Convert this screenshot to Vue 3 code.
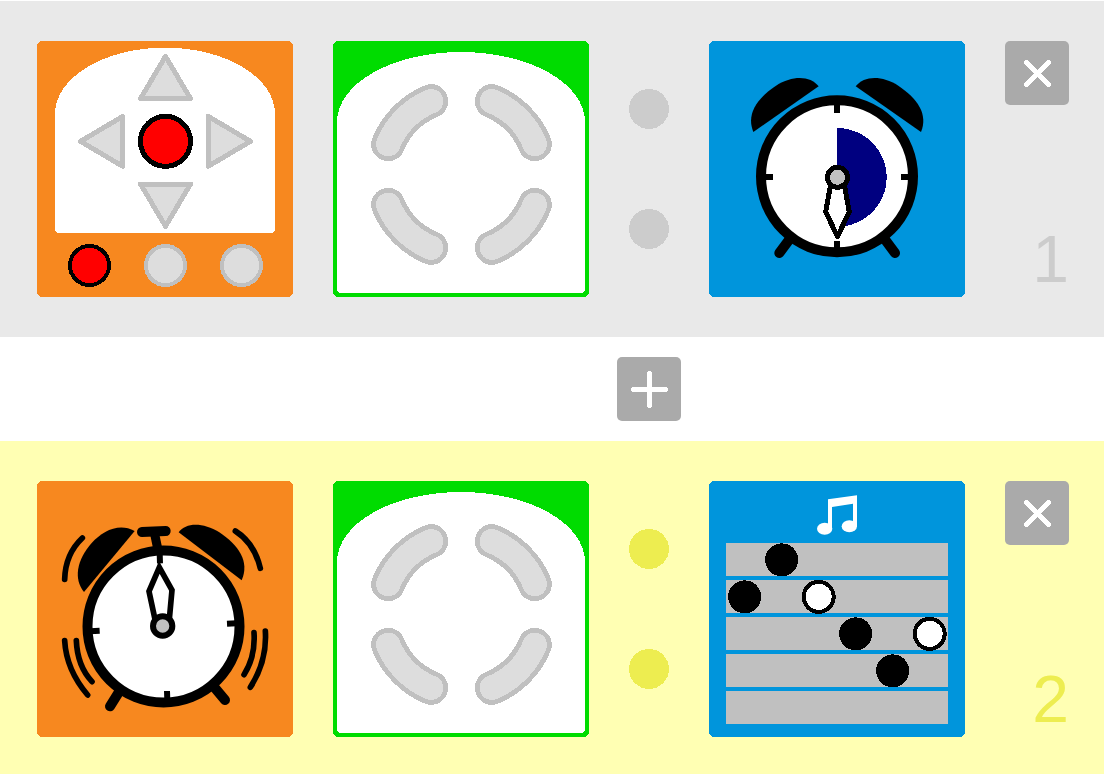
<script setup>
const arrows = [0, 90, 180, 270]
const corners = [
  { x: 1, y: 1 },
  { x: -1, y: 1 },
  { x: 1, y: -1 },
  { x: -1, y: -1 },
]
const staff = [0, 1, 2, 3, 4]
const notes = [
  { row: 1, long: false },
  { row: 0, long: false },
  { row: 1, long: true },
  { row: 2, long: false },
  { row: 3, long: false },
  { row: 2, long: true },
]
const steps = [
  { id: 1, theme: 'gray', event: 'buttons', action: 'timer' },
  { id: 2, theme: 'yellow', event: 'alarm', action: 'music' },
]
</script>

<template>
  <main class="program">
    <template v-for="(step, i) in steps" :key="step.id">
      <div v-if="i > 0" class="insert">
        <button class="tool add" type="button" aria-label="Add step">
          <svg viewBox="0 0 64 64" aria-hidden="true"><path d="M32.5 16.5V48.5M16.5 32.5H48.5" /></svg>
        </button>
      </div>

      <section class="step" :class="step.theme">
        <svg v-if="step.event === 'buttons'" class="tile" viewBox="21 21 768 768" role="img" aria-label="Buttons">
          <rect class="orange" x="21" y="21" width="768" height="768" rx="16" />
          <path class="white" d="M75 240A330 199 0 0 1 735 240V585Q735 597 723 597H87Q75 597 75 585Z" />
          <path
            v-for="angle in arrows"
            :key="angle"
            class="off"
            d="M406.500 67L481.500 194H331.500Z"
            :transform="`rotate(${angle} 406.500 322)`"
          />
          <circle class="on" cx="406.500" cy="322" r="75" />
          <circle class="on small" cx="178.500" cy="694.500" r="58.500" />
          <circle class="off small" cx="406.500" cy="694.500" r="58.500" />
          <circle class="off small" cx="634.500" cy="694.500" r="58.500" />
        </svg>

        <svg v-else class="tile" viewBox="21 21 768 768" role="img" aria-label="Alarm">
          <rect class="orange" x="21" y="21" width="768" height="768" rx="16" />
          <g class="smooth">
            <path d="M314 171C268 145 218 170 185 207C140 258 130 315 162 354Z" />
            <path d="M446 175C468 144 520 145 568 175C625 213 660 262 635 319Z" />
            <path class="limb" d="M336 174L407 171M268 652L240 697M553 640L585 678" />
            <path class="stem" d="M374 180L384 228" />
            <circle class="face" cx="400.500" cy="457.500" r="228" />
            <path class="tick" d="M389 238L390 268M180 472L209 470.500M591 449.500L620 448M411 651L412 680" />
            <path class="hand" d="M375 436L357 352L388 280L426 348L418 436" />
            <circle class="hub" cx="398" cy="456" r="29" />
            <path
              class="wave"
              d="M157 192Q106 240 104 316M616 171Q673 207 691 283M104 500Q109 588 173 663M139 500Q142 576 186 623M706 471Q712 560 661 640M672 476Q677 547 642 602"
            />
          </g>
        </svg>

        <svg class="tile" viewBox="21 21 768 768" role="img" aria-label="Proximity sensors">
          <rect class="green" x="21" y="21" width="768" height="768" rx="16" />
          <path class="white" d="M33 264A372 210 0 0 1 777 264V765Q777 777 765 777H45Q33 777 33 765Z" />
          <g
            v-for="c in corners"
            :key="`${c.x}:${c.y}`"
            :transform="`translate(406.500 421.500) scale(${c.x} ${c.y})`"
          >
            <path class="sensor-rim" d="M-220 -91A238 238 0 0 1 -91 -220" />
            <path class="sensor" d="M-220 -91A238 238 0 0 1 -91 -220" />
          </g>
        </svg>

        <div class="dots" aria-hidden="true">
          <svg viewBox="0 0 40 40"><circle cx="20" cy="20" r="20" /></svg>
          <svg viewBox="0 0 40 40"><circle cx="20" cy="20" r="20" /></svg>
        </div>

        <svg v-if="step.action === 'timer'" class="tile" viewBox="21 21 768 768" role="img" aria-label="Timer">
          <rect class="blue" x="21" y="21" width="768" height="768" rx="16" />
          <g class="smooth">
            <path d="M350 157C325 125 272 123 222 155C165 193 132 240 154 294Z" />
            <path d="M350 157C325 125 272 123 222 155C165 193 132 240 154 294Z" transform="translate(811 0) scale(-1 1)" />
            <path class="limb" d="M266 611L232 657M545 611L579 657" />
            <circle class="face" cx="405" cy="427" r="228" />
          </g>
          <path class="tick" d="M405 206V237M184 429H213M597 429H626M405 621V650" />
          <path class="slice" d="M405 430V282A149 148 0 0 1 405 578Z" />
          <path class="hand down" d="M386 452L371 534L406.500 607L442 534L427 452" />
          <circle class="hub down" cx="406.500" cy="430" r="30" />
        </svg>

        <svg v-else class="tile" viewBox="21 21 768 768" role="img" aria-label="Melody">
          <rect class="blue" x="21" y="21" width="768" height="768" rx="16" />
          <g class="white smooth">
            <path d="M378 76L465 64V157H453V89L390 99V164H378Z" />
            <ellipse cx="368" cy="164" rx="23" ry="18" />
            <ellipse cx="442" cy="157" rx="23" ry="18" />
          </g>
          <rect v-for="n in staff" :key="n" class="line" x="72" :y="207 + n * 111" width="666" height="99" />
          <circle
            v-for="(note, col) in notes"
            :key="col"
            :class="note.long ? 'long' : 'short'"
            :cx="128 + col * 111"
            :cy="257.5 + note.row * 111"
            :r="note.long ? 45 : 49.5"
          />
        </svg>

        <div class="side">
          <button class="tool" type="button" :aria-label="`Remove step ${step.id}`">
            <svg viewBox="0 0 64 64" aria-hidden="true"><path d="M21.500 21.500L43.500 43.500M43.500 21.500L21.500 43.500" /></svg>
          </button>
          <span class="number">{{ step.id }}</span>
        </div>
      </section>
    </template>
  </main>
</template>

<style>
body {
  margin: 0;
  background: #fff;
}
</style>

<style scoped>
.program {
  box-sizing: border-box;
  height: 100vh;
  padding-top: 1px;
  overflow: hidden;
  font-family: "Liberation Sans", Arial, sans-serif;
}
.step,
.insert {
  display: grid;
  grid-template-columns: minmax(0, 256px) minmax(0, 256px) 40px minmax(0, 256px) 64px;
  column-gap: 40px;
  justify-content: center;
  padding: 40px 35px 40px 37px;
}
.insert {
  padding-top: 20px;
  padding-bottom: 20px;
}
.add {
  grid-column: 3;
  justify-self: center;
}
.gray {
  background: #e9e9e9;
  color: #ccc;
}
.yellow {
  background: #ffffb3;
  color: #eded50;
}
svg {
  display: block;
  shape-rendering: crispEdges;
}
.tile {
  width: 100%;
}
.smooth * {
  shape-rendering: auto;
}
.dots {
  display: flex;
  flex-direction: column;
  justify-content: center;
  gap: 80px;
}
.dots svg {
  width: 40px;
  fill: currentColor;
}
.side {
  display: flex;
  flex-direction: column;
  justify-content: space-between;
}
.number {
  font-size: 66px;
  line-height: 76px;
  text-align: right;
}
.tool {
  width: 64px;
  height: 64px;
  padding: 0;
  border: 0;
  border-radius: 5px;
  background: #aaa;
  cursor: pointer;
}
.tool path {
  fill: none;
  stroke: #fff;
  stroke-width: 5;
  stroke-linecap: round;
}
.orange { fill: #f7881f; }
.green { fill: #00dc00; }
.blue { fill: #0095dc; }
.white { fill: #fff; }
.off {
  fill: #ddd;
  stroke: #c0c0c0;
  stroke-width: 15;
  stroke-linejoin: round;
}
.on {
  fill: #f00;
  stroke: #000;
  stroke-width: 15;
}
.small { stroke-width: 12; }
.sensor,
.sensor-rim {
  fill: none;
  stroke-linecap: round;
}
.sensor-rim {
  stroke: #c0c0c0;
  stroke-width: 102;
}
.sensor {
  stroke: #ddd;
  stroke-width: 73;
}
.limb {
  fill: none;
  stroke: #000;
  stroke-width: 30;
  stroke-linecap: round;
}
.stem {
  stroke: #000;
  stroke-width: 27;
}
.face {
  fill: #fff;
  stroke: #000;
  stroke-width: 30;
}
.tick {
  stroke: #000;
  stroke-width: 18;
}
.hand {
  fill: #fff;
  stroke: #000;
  stroke-width: 17;
}
.hub {
  fill: #c0c0c0;
  stroke: #000;
  stroke-width: 18;
}
.hand.down,
.hub.down { stroke-width: 15; }
.hand.down { stroke-linejoin: round; }
.slice { fill: #000080; }
.wave {
  fill: none;
  stroke: #000;
  stroke-width: 17;
  stroke-linecap: round;
}
.line { fill: #c0c0c0; }
.short { fill: #000; }
.long {
  fill: #fff;
  stroke: #000;
  stroke-width: 12;
}
</style>
